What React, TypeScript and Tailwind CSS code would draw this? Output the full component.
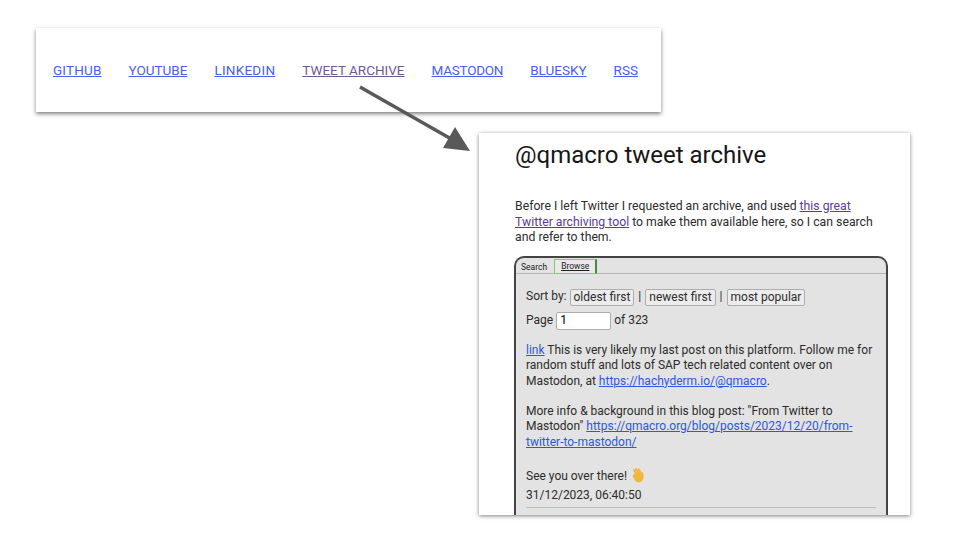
const navLinks = [
  { label: "GITHUB", color: "text-[#4a5ef0] tracking-[0.17px]" },
  { label: "YOUTUBE", color: "text-[#4a5ef0]" },
  { label: "LINKEDIN", color: "text-[#4a5ef0] tracking-[0.25px]" },
  { label: "TWEET ARCHIVE", color: "text-[#6f5a96]" },
  { label: "MASTODON", color: "text-[#4a5ef0] tracking-[-0.25px]" },
  { label: "BLUESKY", color: "text-[#4a5ef0]" },
  { label: "RSS", color: "text-[#4a5ef0]" },
];

const sortButtons = ["oldest first", "newest first", "most popular"];

const Arrow = () => (
  <svg className="absolute left-[355px] top-[82px]" width="120" height="72" viewBox="0 0 120 72">
    <line x1="5" y1="5" x2="98" y2="58" stroke="#595959" strokeWidth="3.5" />
    <polygon points="115,69 88,66 100,45" fill="#595959" />
  </svg>
);

const WaveEmoji = () => (
  <svg className="inline-block ml-[1px] align-[-3px]" width="14" height="15" viewBox="0 0 14 15">
    <path d="M3 2 6 7M5 1 8 6M8 1.500 10 6" stroke="#f2b63c" strokeWidth="2" strokeLinecap="round" />
    <path d="M3 6 1.500 8 4 12.500C5.500 14.500 9 15 11 13 13 11 13 8 12 4.500L10.500 4 10 7 7 4Z" fill="#f2b63c" />
  </svg>
);

const App = () => {
  return (
    <div className="relative w-[960px] h-[540px] overflow-hidden bg-white font-['Roboto',sans-serif]">
      <nav className="absolute left-[36px] top-[28px] w-[625px] h-[84px] flex items-center pl-[17px] pt-[2px] gap-[27px] bg-white shadow-[0_2px_4px_rgba(0,0,0,0.5)] text-[13.500px] leading-none">
        {navLinks.map((link) => (
          <a key={link.label} className={`underline ${link.color}`}>
            {link.label}
          </a>
        ))}
      </nav>

      <Arrow />

      <div className="absolute left-[479px] top-[133px] w-[431px] h-[382px] overflow-hidden bg-white shadow-[0_1px_4px_rgba(0,0,0,0.5)] pl-[35px] pr-[22px] text-[#2c2c2c]">
        <h1 className="mt-[7px] ml-[1px] text-[24px] leading-[30px] text-[#161616]">@qmacro tweet archive</h1>
        <p className="mt-[29px] ml-[1px] text-[12.250px] leading-[15.500px]">
          Before I left Twitter I requested an archive, and used{" "}
          <a className="underline text-[#5b3a9b]">this great</a>
          <br />
          <a className="underline text-[#5b3a9b]">Twitter archiving tool</a> to make them available here, so I can search
          <br />
          and refer to them.
        </p>

        <div className="mt-[10px] h-[300px] rounded-t-[10px] border-2 border-[#444444] border-b-0 bg-[#e3e3e3]">
          <div className="flex items-end h-[16px] pl-[5px] gap-[7px] border-b border-[#b5b5b5] text-[8.500px] leading-none">
            <span className="pb-[1px] text-[#222222]">Search</span>
            <span className="-mb-[1px] h-[15px] flex items-center px-[6px] bg-[#e9e9e9] border border-[#8bc47a] border-r-2 border-r-[#4c8a3e] underline text-[#222222]">
              Browse
            </span>
          </div>

          <div className="px-[10px] pt-[15px] text-[12px] leading-[15.500px]">
            <div className="flex items-center gap-[3px]">
              <span>Sort by:</span>
              {sortButtons.map((label, i) => (
                <span key={label} className="flex items-center gap-[4px]">
                  {i > 0 && <span className="ml-[1px]">|</span>}
                  <button className="h-[17px] px-[3px] border border-[#adadad] rounded-[2px] bg-[#ececec] leading-none">
                    {label}
                  </button>
                </span>
              ))}
            </div>
            <div className="mt-[6px] flex items-center gap-[3px]">
              <span>Page</span>
              <div className="w-[55px] h-[18px] pl-[3px] border border-[#adadad] rounded-[2px] bg-white flex items-center text-black">
                1
              </div>
              <span>of 323</span>
            </div>

            <p className="mt-[13px]">
              <a className="underline text-[#2f55e6]">link</a> This is very likely my last post on this platform. Follow me for
              <br />
              random stuff and lots of SAP tech related content over on
              <br />
              Mastodon, at <a className="underline text-[#2f55e6]">https://hachyderm.io/@qmacro</a>.
            </p>
            <p className="mt-[14.500px]">
              More info &amp; background in this blog post: "From Twitter to
              <br />
              Mastodon" <a className="underline text-[#2f55e6]">https://qmacro.org/blog/posts/2023/12/20/from-</a>
              <br />
              <a className="underline text-[#2f55e6]">twitter-to-mastodon/</a>
            </p>
            <p className="mt-[18px]">
              See you over there! <WaveEmoji />
            </p>
            <p className="mt-[3.500px]">31/12/2023, 06:40:50</p>
            <div className="mt-[3px] border-t border-[#bdbdbd]" />
          </div>
        </div>
      </div>
    </div>
  );
};

export default App;
